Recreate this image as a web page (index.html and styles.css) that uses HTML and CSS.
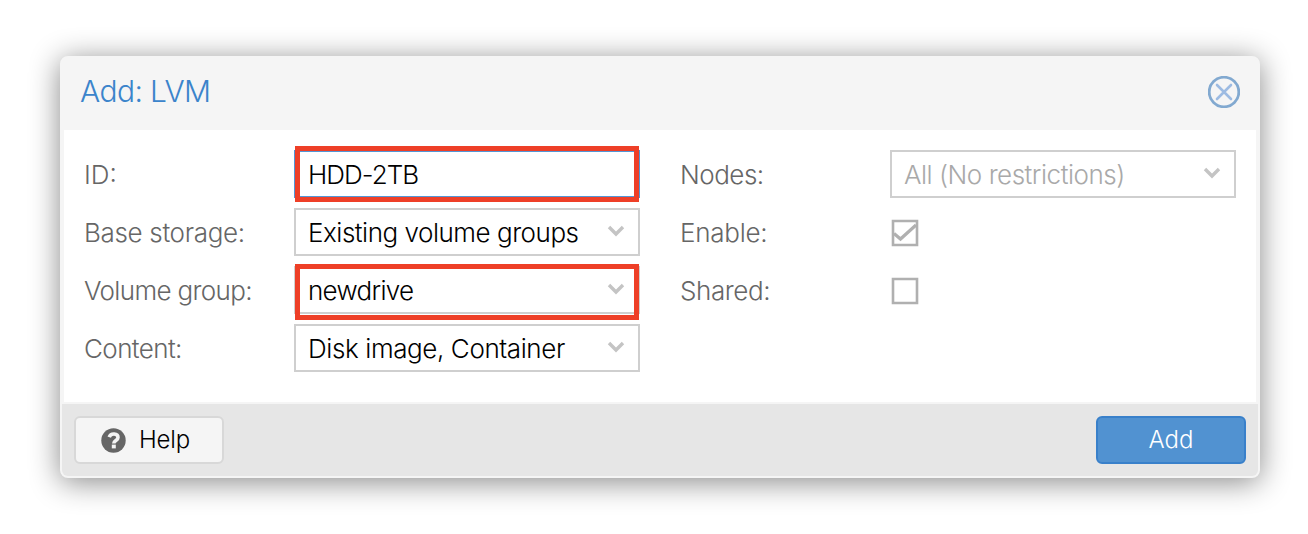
FILE: index.html
```html
<!DOCTYPE html>
<html lang="en">
<head>
<meta charset="utf-8">
<title>Add: LVM</title>
<link rel="stylesheet" href="styles.css">
</head>
<body>
<section class="window">
  <header class="titlebar">
    <h1 class="title">Add: LVM</h1>
    <svg class="close" viewBox="0 0 32 32" width="32" height="32"><circle cx="16" cy="16" r="14.8" fill="none" stroke="#82a9d0" stroke-width="2.8"/><path d="M9 9L23 23M23 9L9 23" stroke="#9dbbe2" stroke-width="2.6" stroke-linecap="round"/></svg>
  </header>
  <main class="form">
    <div class="column">
      <div class="row"><span class="label l-id">ID:</span><div class="field focused"><span class="v-id">HDD-2TB</span><i class="highlight"></i></div></div>
      <div class="row"><span class="label l-base">Base storage:</span><div class="field"><span class="v-base">Existing volume groups</span><svg class="arrow" viewBox="0 0 18 12"><path d="M2 2L9 9L16 2"/></svg></div></div>
      <div class="row"><span class="label l-volume">Volume group:</span><div class="field"><span class="v-volume">newdrive</span><svg class="arrow" viewBox="0 0 18 12"><path d="M2 2L9 9L16 2"/></svg><i class="highlight lower"></i></div></div>
      <div class="row"><span class="label l-content">Content:</span><div class="field"><span class="v-content">Disk image, Container</span><svg class="arrow" viewBox="0 0 18 12"><path d="M2 2L9 9L16 2"/></svg></div></div>
    </div>
    <div class="column">
      <div class="row"><span class="label l-nodes">Nodes:</span><div class="field placeholder"><span class="v-nodes">All (No restrictions)</span><svg class="arrow" viewBox="0 0 18 12"><path d="M2 2L9 9L16 2"/></svg></div></div>
      <div class="row"><span class="label l-enable">Enable:</span><svg class="check" viewBox="0 0 30 30"><path d="M3 3H27V27H3Z"/><path class="tick" d="M4 15.5L10.5 21L26 7"/></svg></div>
      <div class="row"><span class="label l-shared">Shared:</span><svg class="check" viewBox="0 0 30 30"><path d="M3 3H27V27H3Z"/></svg></div>
    </div>
  </main>
  <footer class="toolbar">
    <button class="button help"><svg width="25" height="25" viewBox="0 0 25 25"><circle cx="12.5" cy="12.5" r="12.2" fill="#666"/><path d="M8.2 9.2C9.8 4.6 17 5.3 17 9.4C17 12.5 12.8 12.5 12.8 15.5" fill="none" stroke="#f5f5f5" stroke-width="3.6"/><path d="M10.8 16.6H14.8V20.4H10.8Z" fill="#f5f5f5"/></svg><span>Help</span></button>
    <button class="button add">Add</button>
  </footer>
</section>
</body>
</html>
```
FILE: styles.css
```css
* { box-sizing: border-box; }
body { margin: 0; padding: 56px 48px 56px 60px; background: #fff; font-family: Inter, "Liberation Sans", sans-serif; font-weight: 300; font-size: 26px; }
.window { width: 1200px; height: 422px; border: 2px solid #f5f5f5; border-radius: 8px; background: #f5f5f5; box-shadow: 0 4px 30px #888; display: flex; flex-direction: column; }
.titlebar { height: 72px; flex: none; display: flex; align-items: center; justify-content: space-between; padding: 0 18px 4px; }
.title { margin: -2px 0 0; font-size: 30px; font-weight: 270; line-height: 36px; color: #3b84cb; letter-spacing: -.6px; }
.close { display: block; }
.form { height: 272px; margin: 0 2px 2px; padding: 20px; background: #fff; display: flex; gap: 40px; }
.column { width: 556px; display: flex; flex-direction: column; gap: 10px; }
.row { height: 48px; display: flex; align-items: center; white-space: nowrap; }
.label { width: 210px; flex: none; color: #666; line-height: 32px; padding-top: 2px; }
.l-base { letter-spacing: -.33px; }
.l-volume { letter-spacing: -.65px; }
.l-content { letter-spacing: -.6px; }
.l-nodes { letter-spacing: -.5px; }
.l-enable { letter-spacing: -.25px; }
.l-shared { letter-spacing: -.4px; }
.v-id { letter-spacing: -.95px; }
.v-base { letter-spacing: -.48px; }
.v-volume { letter-spacing: -.7px; }
.v-content { letter-spacing: -.4px; }
.v-nodes { letter-spacing: -.48px; }
.field { position: relative; width: 346px; height: 48px; border: 2px solid #cfcfcf; display: flex; align-items: center; justify-content: space-between; padding: 2px 13px 0 12px; color: #000; line-height: 32px; }
.focused { border-color: #5396d6; }
.placeholder { color: #a9a9a9; }
.arrow { width: 18px; height: 12px; margin-top: -4px; fill: none; stroke: #c4c4c4; stroke-width: 3.4; }
.highlight { position: absolute; left: -1px; top: -6px; width: 344px; height: 56px; border: 5px solid #ee3f27; }
.lower { top: -4px; }
.check { width: 30px; height: 30px; margin-top: 2px; fill: none; stroke: #b0b0b0; stroke-width: 2.6; }
.tick { stroke-width: 3.2; }
.toolbar { height: 72px; flex: none; background: #e6e6e6; border-radius: 0 0 6px 6px; padding: 12px; display: flex; justify-content: space-between; }
.button { height: 48px; border: 2px solid #d8d8d8; border-radius: 6px; background: #f5f5f5; color: #000; font: 300 24px/30px Inter, "Liberation Sans", sans-serif; padding: 0; display: flex; align-items: center; justify-content: center; }
.help { width: 150px; gap: 13px; padding-right: 7px; letter-spacing: -.2px; }
.add { width: 150px; background: #5192d1; border-color: #3980ca; color: #fff; font-weight: 270; }
```
